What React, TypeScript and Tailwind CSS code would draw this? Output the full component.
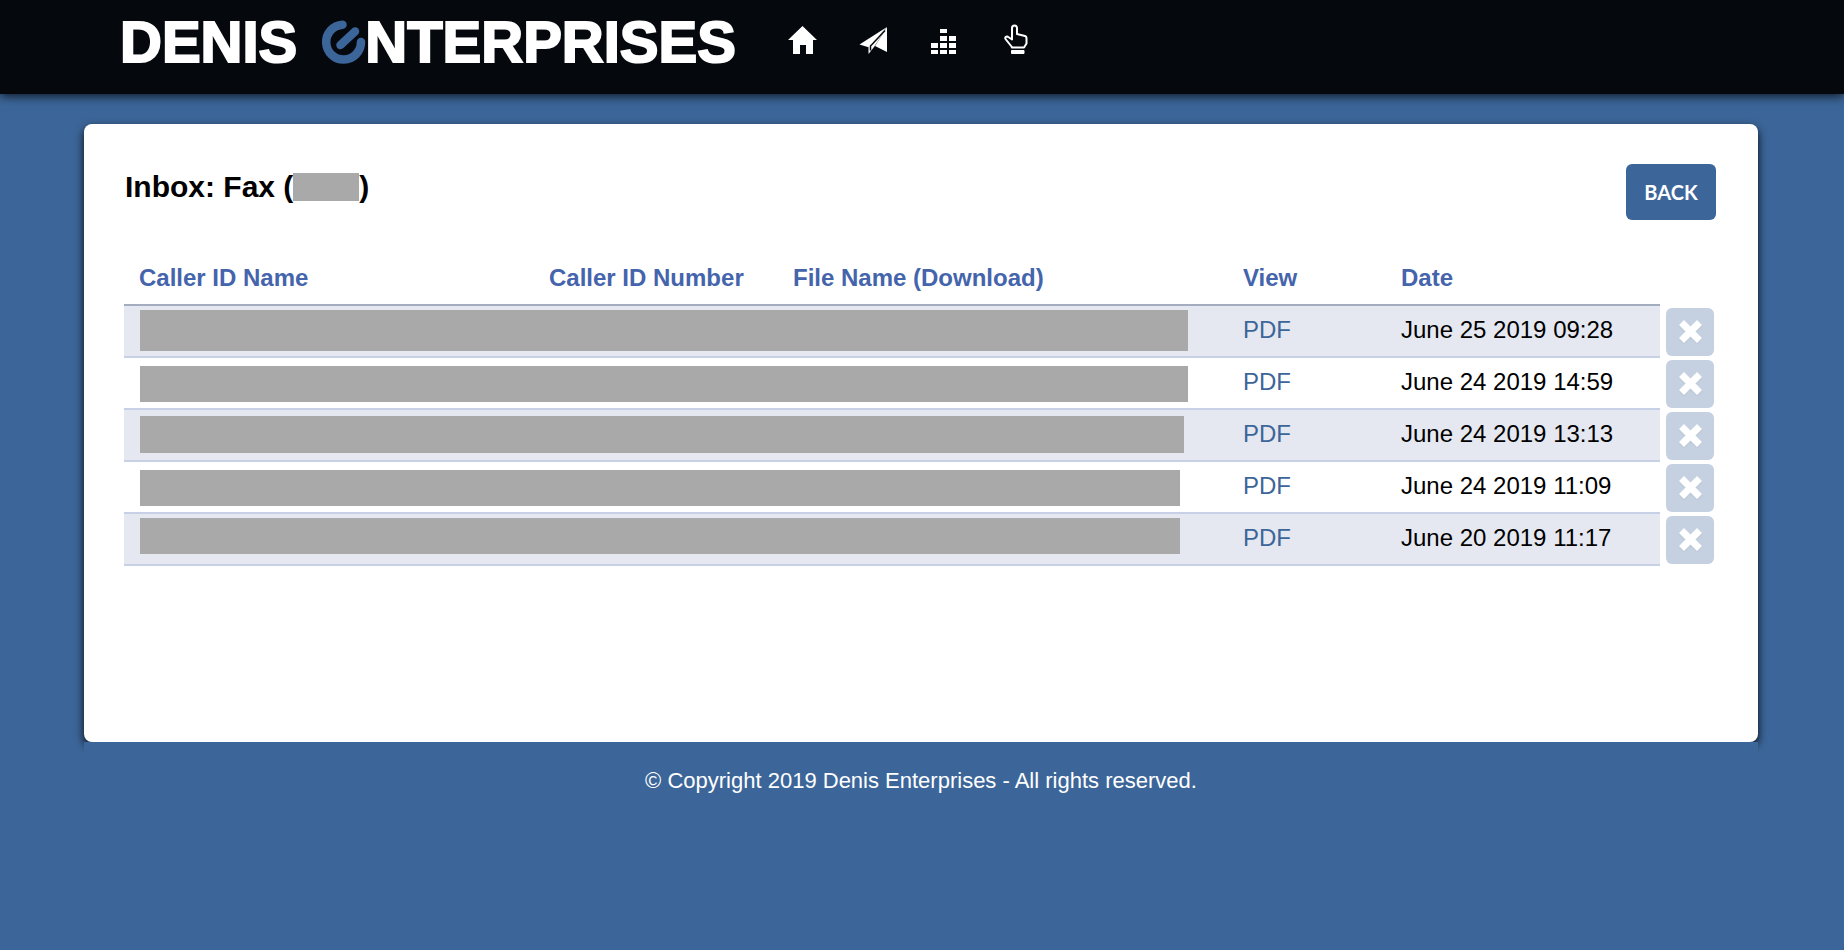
import React from 'react';

type Fax = {
    id: number;
    date: string;
    bar: string;
};

// Caller details are masked, each row has its own mask size
const faxes: Fax[] = [
    { id: 1, date: 'June 25 2019 09:28', bar: 'mt-1 h-[41px] mr-10' },
    { id: 2, date: 'June 24 2019 14:59', bar: 'mt-2 h-[36px] mr-10' },
    { id: 3, date: 'June 24 2019 13:13', bar: 'mt-1.5 h-[37px] mr-11' },
    { id: 4, date: 'June 24 2019 11:09', bar: 'mt-2 h-[36px] mr-12' },
    { id: 5, date: 'June 20 2019 11:17', bar: 'mt-1 h-[36px] mr-12' },
];

const Logo: React.FC = () => (
    <a href="#" aria-label="Denis Enterprises" className="flex items-center text-[58px] leading-[72px] font-bold text-white">
        <span className="[-webkit-text-stroke:2px_white]">DENIS</span>
        <svg className="ml-[25px] h-11 w-[43px] overflow-visible" viewBox="0 0 42 44" fill="none" stroke="#3c6699" strokeLinecap="round">
            <path d="M20 4.700A17.400 17.400 0 1 0 38.500 22" strokeWidth="8.500" />
            <path d="M18 25L32.500 11.500" strokeWidth="8.500" />
        </svg>
        <span className="[-webkit-text-stroke:2px_white]">NTERPRISES</span>
    </a>
);

const HomeIcon = () => (
    <svg className="h-8 w-8" viewBox="0 0 32 32" fill="white">
        <path d="M16.500 3L31 17H27v14h-7v-9h-6v9H7V17H2z" />
    </svg>
);

const SendIcon = () => (
    <svg className="h-8 w-8" viewBox="0 0 32 32" fill="white">
        <path d="M29 4L1.500 21.500l9 2.700z" />
        <path d="M29 4.500L10.500 22v9l5.500-7z" />
        <path d="M29 4v25l-12-6z" />
        <path d="M27 7.500L12.500 23v4.500" fill="none" stroke="#05090e" strokeWidth="1.500" />
    </svg>
);

const StatsIcon = () => (
    <svg className="h-8 w-8" viewBox="0 0 32 32" fill="white">
        <path d="M1 20h7v5H1zM1 27h7v4H1zM10 6h7v4h-7zM10 13h7v5h-7zM10 20h7v5h-7zM10 27h7v4h-7zM19 13h7v5h-7zM19 20h7v5h-7zM19 27h7v4h-7z" />
    </svg>
);

const HandIcon = () => (
    <svg className="h-8 w-8" viewBox="0 0 32 32" fill="none" stroke="white" strokeWidth="2" strokeLinejoin="round">
        <path d="M9.500 23.500L3.500 16Q2.500 13.500 5.500 13.500L10 16.500V5Q10 2.500 12.500 2.500T15 5V11L23 13Q24.500 13.500 24.500 15V20.500L22 24.500H10z" />
        <path d="M9.500 27.500H22v3H9.500z" fill="white" strokeWidth="1" />
    </svg>
);

const RemoveIcon = () => (
    <svg className="h-6 w-6 drop-shadow-xs" viewBox="0 0 24 24" stroke="white" strokeWidth="7">
        <path d="M3.500 2.500l18 18M21.500 2.500l-18 18" />
    </svg>
);

const Header: React.FC = () => (
    <header className="relative flex h-[94px] items-start bg-[#05090e] pt-1.5 pl-[120px] shadow-[0_2px_10px_rgba(0,0,0,0.8)]">
        <Logo />
        <nav className="ml-[50px] flex gap-10 pt-[17px]">
            <a href="#" aria-label="Home"><HomeIcon /></a>
            <a href="#" aria-label="Send"><SendIcon /></a>
            <a href="#" aria-label="Statistics"><StatsIcon /></a>
            <a href="#" aria-label="Select"><HandIcon /></a>
        </nav>
    </header>
);

const FaxTable: React.FC = () => (
    <table className="mt-6 w-full table-fixed border-separate border-spacing-0 text-left text-2xl leading-8">
        <colgroup>
            <col />
            <col className="w-[244px]" />
            <col className="w-[450px]" />
            <col className="w-[158px]" />
            <col className="w-[274px]" />
            <col className="w-[56px]" />
        </colgroup>
        <thead>
            <tr className="h-[62px] text-[#4464ac]">
                <th className="border-b-2 border-[#a4acc0] pt-2 pl-[15px]">Caller ID Name</th>
                <th className="border-b-2 border-[#a4acc0] pt-2 pl-[15px]">Caller ID Number</th>
                <th className="border-b-2 border-[#a4acc0] pt-2 pl-[15px]">File Name (Download)</th>
                <th className="border-b-2 border-[#a4acc0] pt-2 pl-[15px]">View</th>
                <th className="border-b-2 border-[#a4acc0] pt-2 pl-[15px]">Date</th>
                <td></td>
            </tr>
        </thead>
        <tbody>
            {faxes.map((fax) => (
                <tr key={fax.id} className="group h-[52px]">
                    <td colSpan={3} className="border-b-2 border-[#c7d0e5] p-0 align-top group-odd:bg-[#e5e8f0]">
                        <div className={`ml-4 bg-[#a9a9a9] ${fax.bar}`}></div>
                    </td>
                    <td className="border-b-2 border-[#c7d0e5] pb-0.5 pl-[15px] group-odd:bg-[#e5e8f0]">
                        <a href="#" className="text-[#3c6699]">PDF</a>
                    </td>
                    <td className="border-b-2 border-[#c7d0e5] pb-0.5 pl-[15px] whitespace-nowrap text-black group-odd:bg-[#e5e8f0]">{fax.date}</td>
                    <td className="p-0 pl-1.5 align-top">
                        <button type="button" aria-label="Delete fax" className="mt-0.5 flex h-12 w-12 items-center justify-center rounded-md bg-[#c5d0e0]">
                            <RemoveIcon />
                        </button>
                    </td>
                </tr>
            ))}
        </tbody>
    </table>
);

export default function App() {
    return (
        <div className="min-h-screen bg-[#3c6699] font-['Liberation_Sans',Arial,sans-serif]">
            <Header />
            <div className="pt-[30px] pr-[86px] pl-[84px]">
                <main className="min-h-[618px] rounded-lg bg-white pt-10 pr-[42px] pl-10 shadow-[0_4px_10px_rgba(0,0,0,0.9)]">
                    <div className="flex items-start justify-between">
                        <h1 className="flex items-center pl-px text-[30px] leading-[46px] font-bold text-black">
                            Inbox: Fax (
                            <span className="h-7 w-[66px] bg-[#a9a9a9]"></span>
                            )
                        </h1>
                        <button type="button" className="h-14 w-[90px] rounded-md bg-[#3c6699] font-['Lato',sans-serif] text-xl font-bold text-white">
                            BACK
                        </button>
                    </div>
                    <FaxTable />
                </main>
                <footer className="relative bg-[#3c6699] pt-6 text-center text-[22px] leading-[30px] text-white">
                    © Copyright 2019 Denis Enterprises - All rights reserved.
                </footer>
            </div>
        </div>
    );
}
